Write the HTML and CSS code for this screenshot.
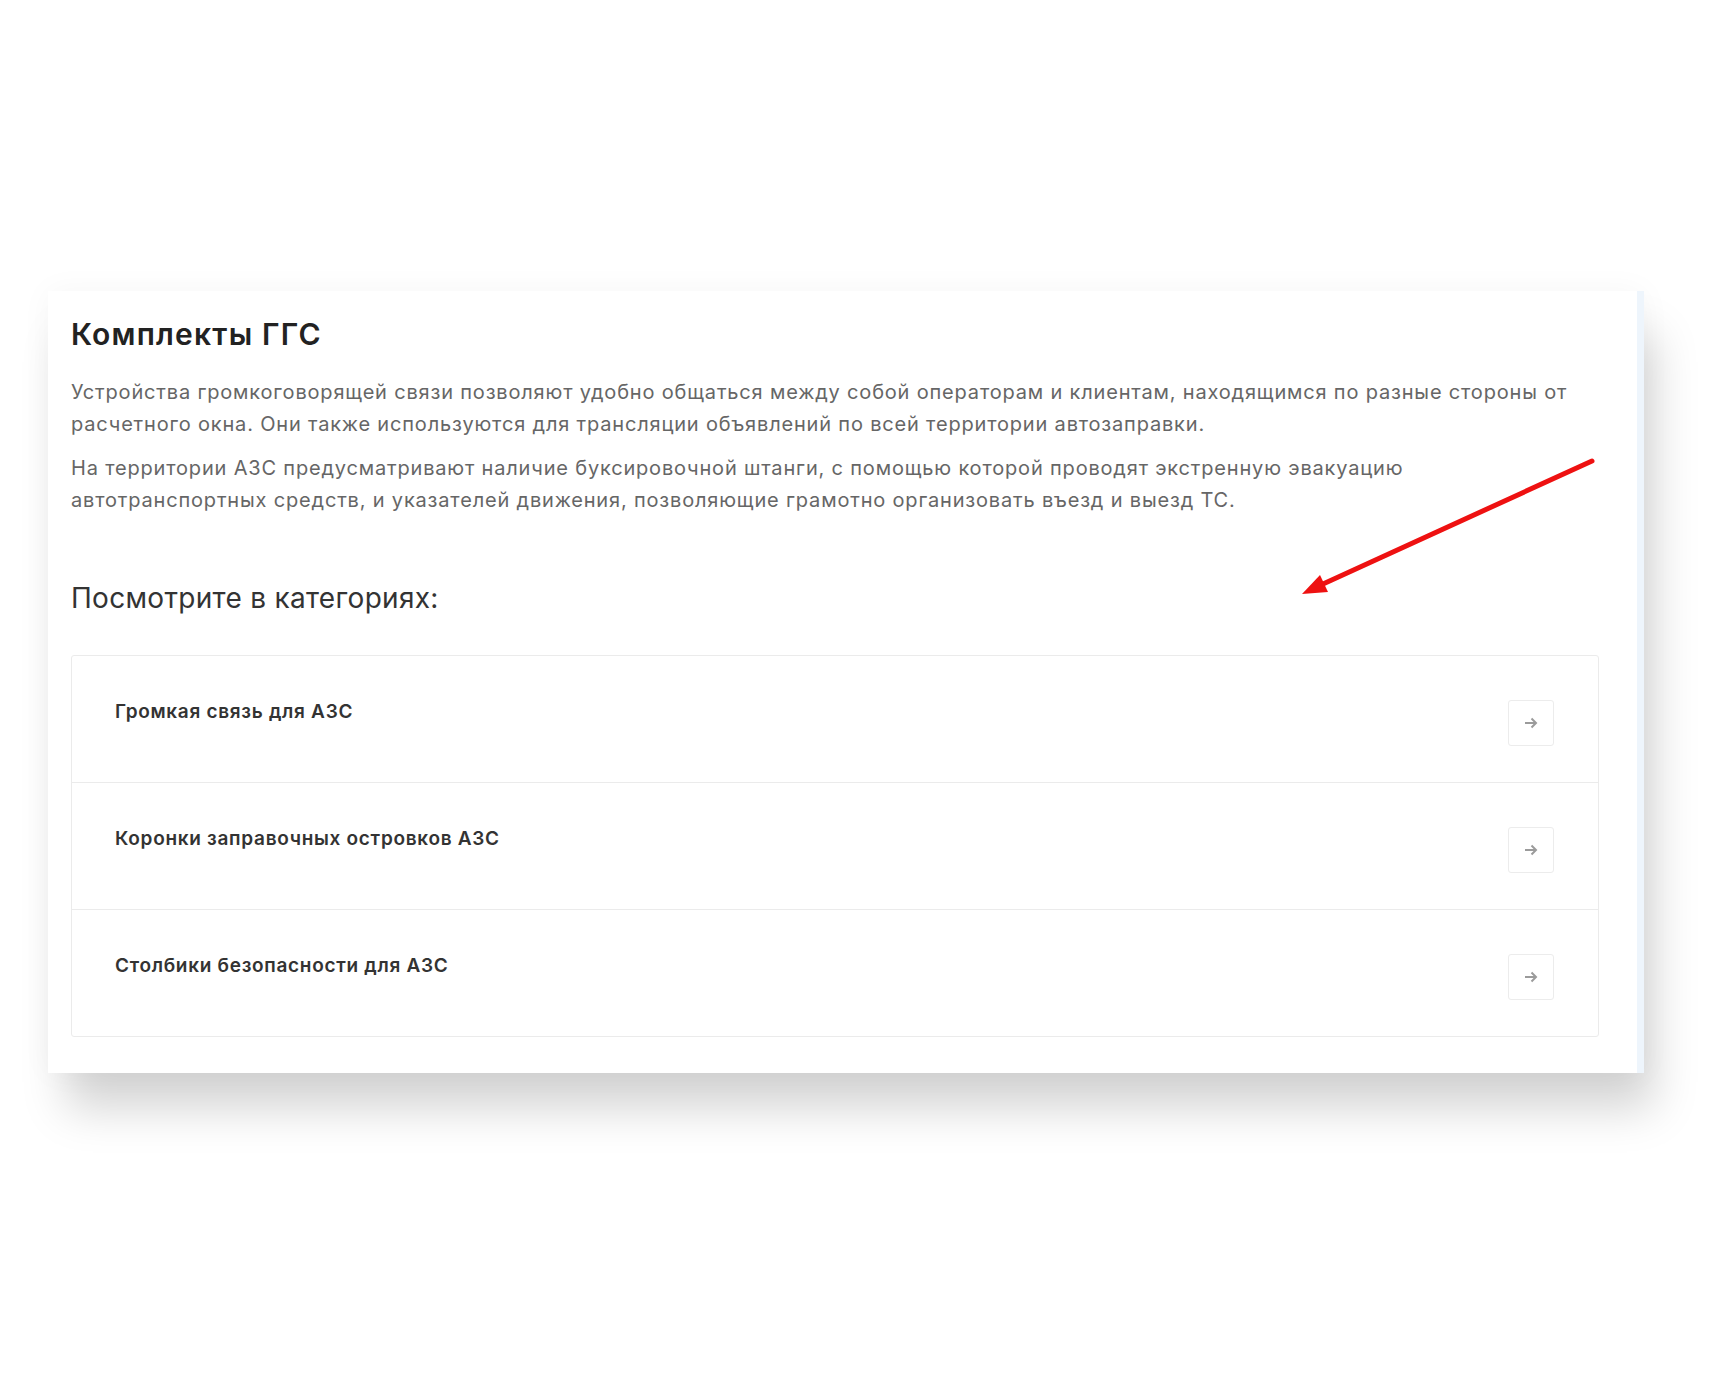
FILE: index.html
```
<!doctype html>
<html>
	<head>
		<meta charset="utf-8" />
		<title>Комплекты ГГС</title>
		<link rel="stylesheet" href="styles.css">
	</head>
	<body>
		<div class="page">
			<div class="card">
				<h1 class="title">Комплекты ГГС</h1>
				<p class="text">Устройства громкоговорящей связи позволяют удобно общаться между собой операторам и клиентам, находящимся по разные стороны от расчетного окна. Они также используются для трансляции объявлений по всей территории автозаправки.</p>
				<p class="text">На территории АЗС предусматривают наличие буксировочной штанги, с помощью которой проводят экстренную эвакуацию автотранспортных средств, и указателей движения, позволяющие грамотно организовать въезд и выезд ТС.</p>
				<h2 class="subtitle">Посмотрите в категориях:</h2>
				<ul class="cats">
					<li class="cat">
						<span class="cat-name">Громкая связь для АЗС</span>
						<span class="cat-btn"><svg width="14" height="12" viewBox="0 0 14 12"><path d="M1 6H12M7.5 1.5L12 6L7.5 10.5" fill="none" stroke="#9b9b9b" stroke-width="2"/></svg></span>
					</li>
					<li class="cat">
						<span class="cat-name">Коронки заправочных островков АЗС</span>
						<span class="cat-btn"><svg width="14" height="12" viewBox="0 0 14 12"><path d="M1 6H12M7.5 1.5L12 6L7.5 10.5" fill="none" stroke="#9b9b9b" stroke-width="2"/></svg></span>
					</li>
					<li class="cat">
						<span class="cat-name">Столбики безопасности для АЗС</span>
						<span class="cat-btn"><svg width="14" height="12" viewBox="0 0 14 12"><path d="M1 6H12M7.5 1.5L12 6L7.5 10.5" fill="none" stroke="#9b9b9b" stroke-width="2"/></svg></span>
					</li>
				</ul>
				<!-- red pointer drawn over the card -->
				<svg class="pointer" width="320" height="160" viewBox="0 0 320 160">
					<line x1="304" y1="10" x2="35" y2="133" stroke="#ee1111" stroke-width="5" stroke-linecap="round"/>
					<polygon points="14,143 40,141 32,124" fill="#ee1111"/>
				</svg>
			</div>
		</div>
	</body>
</html>
```

FILE: styles.css
```
*{
	margin:0;
	padding:0;
	box-sizing:border-box;
}
html{
	background:#fff;
}
body{
	min-height:100vh;
	font-family:Inter,"Noto Sans",sans-serif;
}
ul{
	list-style:none;
}
.page{
	padding:291px 0 160px 48px;
}
.card{
	position:relative;
	width:1596px;
	padding:25px 38px 36px 23px;
	background:#fff;
	border-right:7px solid #eef5fc;
	box-shadow:14px 40px 42px -4px rgba(0,0,0,.17),0 0 30px rgba(0,0,0,.04);
}
.title{
	font-size:30px;
	line-height:36px;
	font-weight:600;
	letter-spacing:1.2px;
	color:#222;
}
.text{
	margin-top:24px;
	font-size:20px;
	line-height:32px;
	letter-spacing:.82px;
	color:#666;
}
.text + .text{
	margin-top:12px;
}
.subtitle{
	margin-top:64px;
	font-size:28px;
	line-height:36px;
	font-weight:400;
	letter-spacing:.3px;
	color:#333;
}
.cats{
	margin-top:39px;
	border:1px solid #ebebeb;
	border-radius:3px;
}
.cat{
	display:flex;
	justify-content:space-between;
	align-items:flex-start;
	padding:44px 44px 36px 43px;
}
.cat + .cat{
	border-top:1px solid #ebebeb;
}
.cat-name{
	margin-top:-1px;
	font-size:19px;
	line-height:26px;
	font-weight:600;
	letter-spacing:.7px;
	color:#333;
}
.cat-btn{
	display:flex;
	align-items:center;
	justify-content:center;
	width:46px;
	height:46px;
	border:1px solid #ececec;
	border-radius:3px;
}
.pointer{
	position:absolute;
	left:1240px;
	top:160px;
}
```
